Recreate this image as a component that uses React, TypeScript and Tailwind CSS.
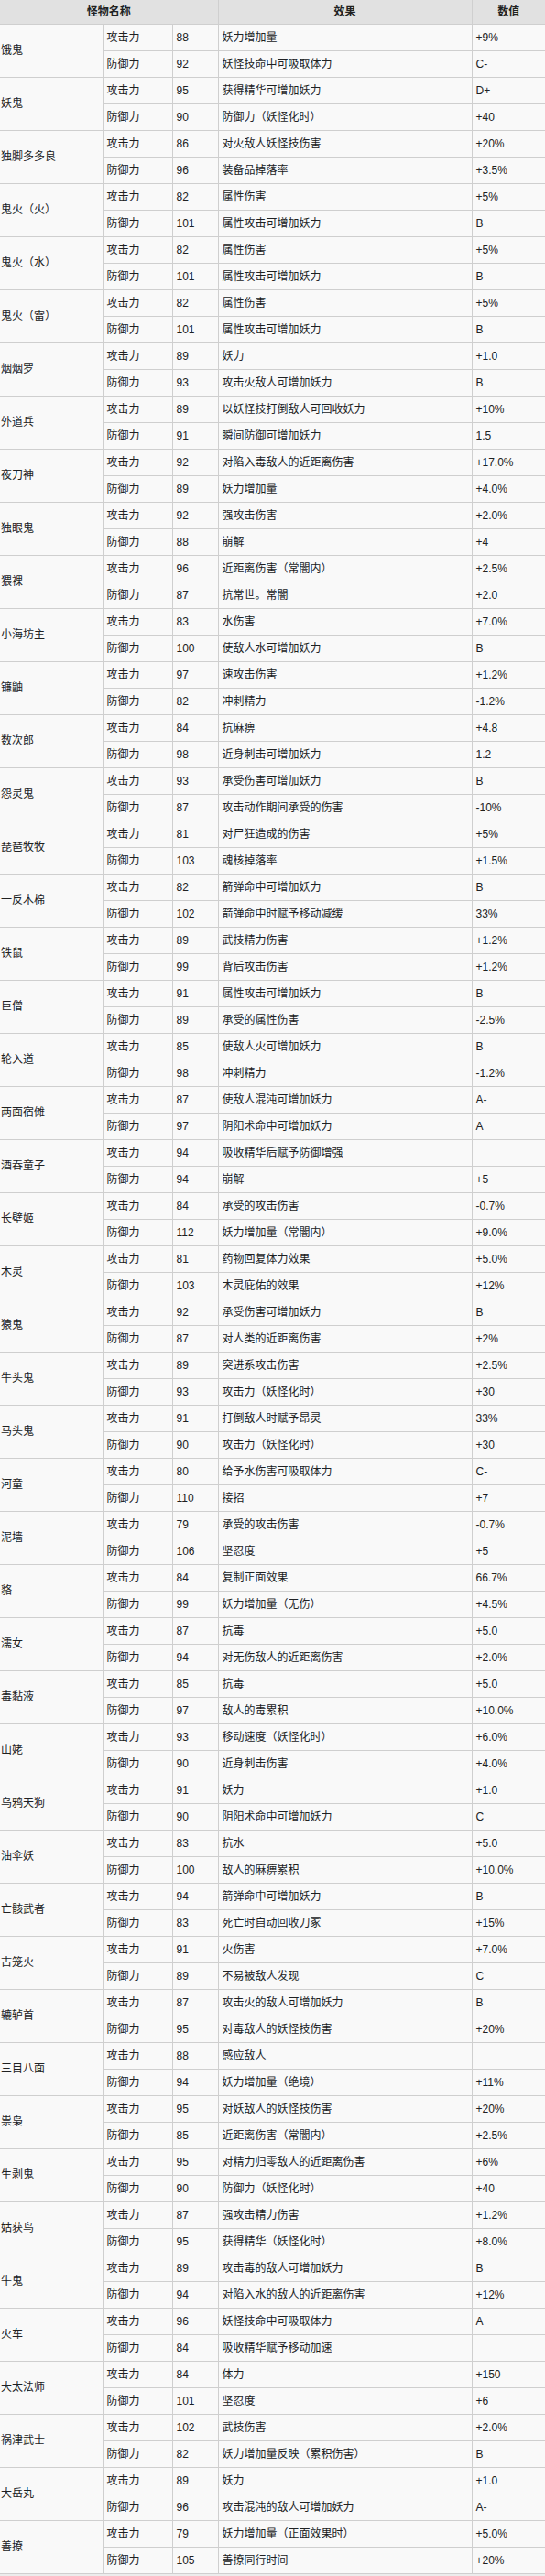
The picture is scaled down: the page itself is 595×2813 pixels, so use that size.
import React from 'react';

type Row = { name: string; atk: [number, string, string]; def: [number, string, string] };

const rows: Row[] = [
  { name: '饿鬼', atk: [88, '妖力增加量', '+9%'], def: [92, '妖怪技命中可吸取体力', 'C-'] },
  { name: '妖鬼', atk: [95, '获得精华可增加妖力', 'D+'], def: [90, '防御力（妖怪化时）', '+40'] },
  { name: '独脚多多良', atk: [86, '对火敌人妖怪技伤害', '+20%'], def: [96, '装备品掉落率', '+3.5%'] },
  { name: '鬼火（火）', atk: [82, '属性伤害', '+5%'], def: [101, '属性攻击可增加妖力', 'B'] },
  { name: '鬼火（水）', atk: [82, '属性伤害', '+5%'], def: [101, '属性攻击可增加妖力', 'B'] },
  { name: '鬼火（雷）', atk: [82, '属性伤害', '+5%'], def: [101, '属性攻击可增加妖力', 'B'] },
  { name: '烟烟罗', atk: [89, '妖力', '+1.0'], def: [93, '攻击火敌人可增加妖力', 'B'] },
  { name: '外道兵', atk: [89, '以妖怪技打倒敌人可回收妖力', '+10%'], def: [91, '瞬间防御可增加妖力', '1.5'] },
  { name: '夜刀神', atk: [92, '对陷入毒敌人的近距离伤害', '+17.0%'], def: [89, '妖力增加量', '+4.0%'] },
  { name: '独眼鬼', atk: [92, '强攻击伤害', '+2.0%'], def: [88, '崩解', '+4'] },
  { name: '猥裸', atk: [96, '近距离伤害（常闇内）', '+2.5%'], def: [87, '抗常世。常闇', '+2.0'] },
  { name: '小海坊主', atk: [83, '水伤害', '+7.0%'], def: [100, '使敌人水可增加妖力', 'B'] },
  { name: '镰鼬', atk: [97, '速攻击伤害', '+1.2%'], def: [82, '冲刺精力', '-1.2%'] },
  { name: '数次郎', atk: [84, '抗麻痹', '+4.8'], def: [98, '近身刺击可增加妖力', '1.2'] },
  { name: '怨灵鬼', atk: [93, '承受伤害可增加妖力', 'B'], def: [87, '攻击动作期间承受的伤害', '-10%'] },
  { name: '琵琶牧牧', atk: [81, '对尸狂造成的伤害', '+5%'], def: [103, '魂核掉落率', '+1.5%'] },
  { name: '一反木棉', atk: [82, '箭弹命中可增加妖力', 'B'], def: [102, '箭弹命中时赋予移动减缓', '33%'] },
  { name: '铁鼠', atk: [89, '武技精力伤害', '+1.2%'], def: [99, '背后攻击伤害', '+1.2%'] },
  { name: '巨僧', atk: [91, '属性攻击可增加妖力', 'B'], def: [89, '承受的属性伤害', '-2.5%'] },
  { name: '轮入道', atk: [85, '使敌人火可增加妖力', 'B'], def: [98, '冲刺精力', '-1.2%'] },
  { name: '两面宿傩', atk: [87, '使敌人混沌可增加妖力', 'A-'], def: [97, '阴阳术命中可增加妖力', 'A'] },
  { name: '酒吞童子', atk: [94, '吸收精华后赋予防御增强', ''], def: [94, '崩解', '+5'] },
  { name: '长壁姬', atk: [84, '承受的攻击伤害', '-0.7%'], def: [112, '妖力增加量（常闇内）', '+9.0%'] },
  { name: '木灵', atk: [81, '药物回复体力效果', '+5.0%'], def: [103, '木灵庇佑的效果', '+12%'] },
  { name: '猿鬼', atk: [92, '承受伤害可增加妖力', 'B'], def: [87, '对人类的近距离伤害', '+2%'] },
  { name: '牛头鬼', atk: [89, '突进系攻击伤害', '+2.5%'], def: [93, '攻击力（妖怪化时）', '+30'] },
  { name: '马头鬼', atk: [91, '打倒敌人时赋予昂灵', '33%'], def: [90, '攻击力（妖怪化时）', '+30'] },
  { name: '河童', atk: [80, '给予水伤害可吸取体力', 'C-'], def: [110, '接招', '+7'] },
  { name: '泥墙', atk: [79, '承受的攻击伤害', '-0.7%'], def: [106, '坚忍度', '+5'] },
  { name: '貉', atk: [84, '复制正面效果', '66.7%'], def: [99, '妖力增加量（无伤）', '+4.5%'] },
  { name: '濡女', atk: [87, '抗毒', '+5.0'], def: [94, '对无伤敌人的近距离伤害', '+2.0%'] },
  { name: '毒黏液', atk: [85, '抗毒', '+5.0'], def: [97, '敌人的毒累积', '+10.0%'] },
  { name: '山姥', atk: [93, '移动速度（妖怪化时）', '+6.0%'], def: [90, '近身刺击伤害', '+4.0%'] },
  { name: '乌鸦天狗', atk: [91, '妖力', '+1.0'], def: [90, '阴阳术命中可增加妖力', 'C'] },
  { name: '油伞妖', atk: [83, '抗水', '+5.0'], def: [100, '敌人的麻痹累积', '+10.0%'] },
  { name: '亡骸武者', atk: [94, '箭弹命中可增加妖力', 'B'], def: [83, '死亡时自动回收刀冢', '+15%'] },
  { name: '古笼火', atk: [91, '火伤害', '+7.0%'], def: [89, '不易被敌人发现', 'C'] },
  { name: '辘轳首', atk: [87, '攻击火的敌人可增加妖力', 'B'], def: [95, '对毒敌人的妖怪技伤害', '+20%'] },
  { name: '三目八面', atk: [88, '感应敌人', ''], def: [94, '妖力增加量（绝境）', '+11%'] },
  { name: '祟枭', atk: [95, '对妖敌人的妖怪技伤害', '+20%'], def: [85, '近距离伤害（常闇内）', '+2.5%'] },
  { name: '生剥鬼', atk: [95, '对精力归零敌人的近距离伤害', '+6%'], def: [90, '防御力（妖怪化时）', '+40'] },
  { name: '姑获鸟', atk: [87, '强攻击精力伤害', '+1.2%'], def: [95, '获得精华（妖怪化时）', '+8.0%'] },
  { name: '牛鬼', atk: [89, '攻击毒的敌人可增加妖力', 'B'], def: [94, '对陷入水的敌人的近距离伤害', '+12%'] },
  { name: '火车', atk: [96, '妖怪技命中可吸取体力', 'A'], def: [84, '吸收精华赋予移动加速', ''] },
  { name: '大太法师', atk: [84, '体力', '+150'], def: [101, '坚忍度', '+6'] },
  { name: '祸津武士', atk: [102, '武技伤害', '+2.0%'], def: [82, '妖力增加量反映（累积伤害）', 'B'] },
  { name: '大岳丸', atk: [89, '妖力', '+1.0'], def: [96, '攻击混沌的敌人可增加妖力', 'A-'] },
  { name: '善撩', atk: [79, '妖力增加量（正面效果时）', '+5.0%'], def: [105, '善撩同行时间', '+20%'] },
];

const cell = 'h-[29px] px-1 border border-[#cfcfcf] align-middle';

const App: React.FC = () => {
  return (
    <div
      className="min-h-screen bg-[#ececec] text-[12px] leading-none text-[#202122]"
      style={{ fontFamily: '"Liberation Sans", "Noto Sans CJK SC", sans-serif' }}
    >
      <table className="w-full table-fixed border-collapse bg-[#f9f9f9]">
        <colgroup>
          <col className="w-[112px]" />
          <col className="w-[76px]" />
          <col className="w-[50px]" />
          <col className="w-[277px]" />
          <col />
        </colgroup>
        <thead>
          <tr className="bg-[#e1e1e1]">
            <th colSpan={3} className="h-[26px] border border-t-0 border-l-0 border-[#cfcfcf] font-bold text-center">
              怪物名称
            </th>
            <th className="h-[26px] border border-t-0 border-[#cfcfcf] font-bold text-center">效果</th>
            <th className="h-[26px] border border-t-0 border-r-0 border-[#cfcfcf] font-bold text-center">数值</th>
          </tr>
        </thead>
        <tbody>
          {rows.map((r) => (
            <React.Fragment key={r.name}>
              <tr>
                <td rowSpan={2} className="border border-l-0 border-[#cfcfcf] pl-[1px] text-left align-middle">
                  {r.name}
                </td>
                <td className={cell}>攻击力</td>
                <td className={cell}>{r.atk[0]}</td>
                <td className={cell}>{r.atk[1]}</td>
                <td className={`${cell} border-r-0`}>{r.atk[2]}</td>
              </tr>
              <tr>
                <td className={cell}>防御力</td>
                <td className={cell}>{r.def[0]}</td>
                <td className={cell}>{r.def[1]}</td>
                <td className={`${cell} border-r-0`}>{r.def[2]}</td>
              </tr>
            </React.Fragment>
          ))}
        </tbody>
      </table>
    </div>
  );
};

export default App;
